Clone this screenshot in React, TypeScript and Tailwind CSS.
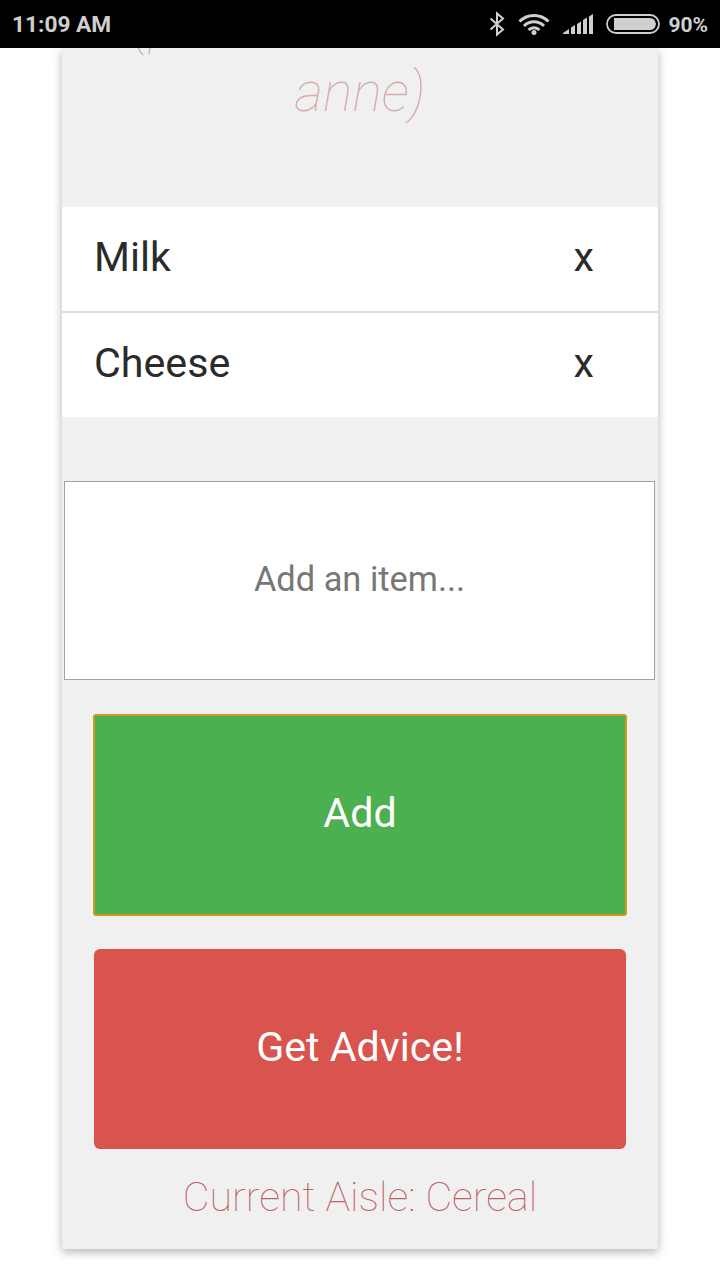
const items = ["Milk", "Cheese"];

function StatusBar() {
  return (
    <header className="relative z-10 flex h-12 items-center justify-between bg-black pl-3 pr-3 text-[#cfcfcf]">
      <span className="pt-[3px] text-[22.7px] font-bold leading-none">11:09 AM</span>
      <div className="flex items-center">
        <svg width="18" height="26" viewBox="0 0 18 26" fill="none" stroke="currentColor" strokeWidth="2">
          <path d="M2.5 7.5 15 18.5 9 23.5V2.5L15 7.5 2.5 18.5" />
        </svg>
        <svg className="ml-[12px]" width="32" height="24" viewBox="0 0 32 24" fill="none" stroke="currentColor" strokeWidth="3">
          <path d="M1.5 9.5a20.5 20.5 0 0 1 29 0M6 14a14 14 0 0 1 20 0M10.5 18a8 8 0 0 1 11 0" />
          <circle cx="16" cy="20.5" r="2.5" fill="currentColor" stroke="none" />
        </svg>
        <svg className="ml-[13px]" width="31" height="22" viewBox="0 0 31 22" fill="currentColor">
          <path d="M0 21v-1l6-4v5ZM8 14.5l4-2.5V21H8ZM14 11l4-2.5V21h-4ZM20 7l4-2.5V21h-4ZM26 3.5 30 1v20h-4Z" />
        </svg>
        <svg className="ml-3" width="54" height="20" viewBox="0 0 54 20">
          <rect x="1" y="1" width="52" height="18" rx="9" fill="none" stroke="currentColor" strokeWidth="1.8" />
          <path d="M8 4h36q5 0 6 6-1 6-6 6H8Z" fill="currentColor" />
        </svg>
        <span className="ml-2 pt-[3px] text-[21px] font-bold leading-none">90%</span>
      </div>
    </header>
  );
}

export default function App() {
  return (
    <div className="h-[1280px] overflow-hidden bg-white font-['Roboto',sans-serif] antialiased">
      <StatusBar />
      <main className="mx-auto h-[1201px] w-[596px] bg-[#f0f0f0] shadow-[0_4px_8px_rgba(0,0,0,0.2),0_0_14px_rgba(0,0,0,0.1)]">
        <div className="h-[159px] overflow-hidden">
          <h1 className="-mt-[57px] text-center text-[55.4px] font-thin italic leading-[68px] text-[#b3474b]/40">
            (pour Marie et Rose
            <br />
            anne)
          </h1>
        </div>
        <ul className="bg-white text-[41.2px] text-[#2b2b2b]">
          {items.map((item) => (
            <li
              key={item}
              className="flex h-[106px] items-center justify-between border-b-2 border-[#dedede] pb-[3px] pl-8 pr-16 last:h-[104px] last:border-0"
            >
              <span>{item}</span>
              <button>x</button>
            </li>
          ))}
        </ul>
        <input
          className="ml-0.5 mt-16 block h-[199px] w-[591px] border border-[#a3a3a3] bg-white pb-1 text-center text-[34.4px] placeholder:text-[#777777]"
          placeholder="Add an item..."
        />
        <button className="mx-auto mt-[34px] block h-[202px] w-[534px] rounded-[3px] border-2 border-[#cd9b1c] bg-[#4caf50] pb-[3px] text-[41.2px] text-white">
          Add
        </button>
        <button className="mx-auto mt-[33px] block h-[200px] w-[532px] rounded-md bg-[#d9534f] pb-[3px] text-[41.2px] text-white">
          Get Advice!
        </button>
        <p className="mt-[24px] text-center text-[41.2px] font-thin leading-[48px] text-[#b3474b]/85">
          Current Aisle: Cereal
        </p>
      </main>
    </div>
  );
}
